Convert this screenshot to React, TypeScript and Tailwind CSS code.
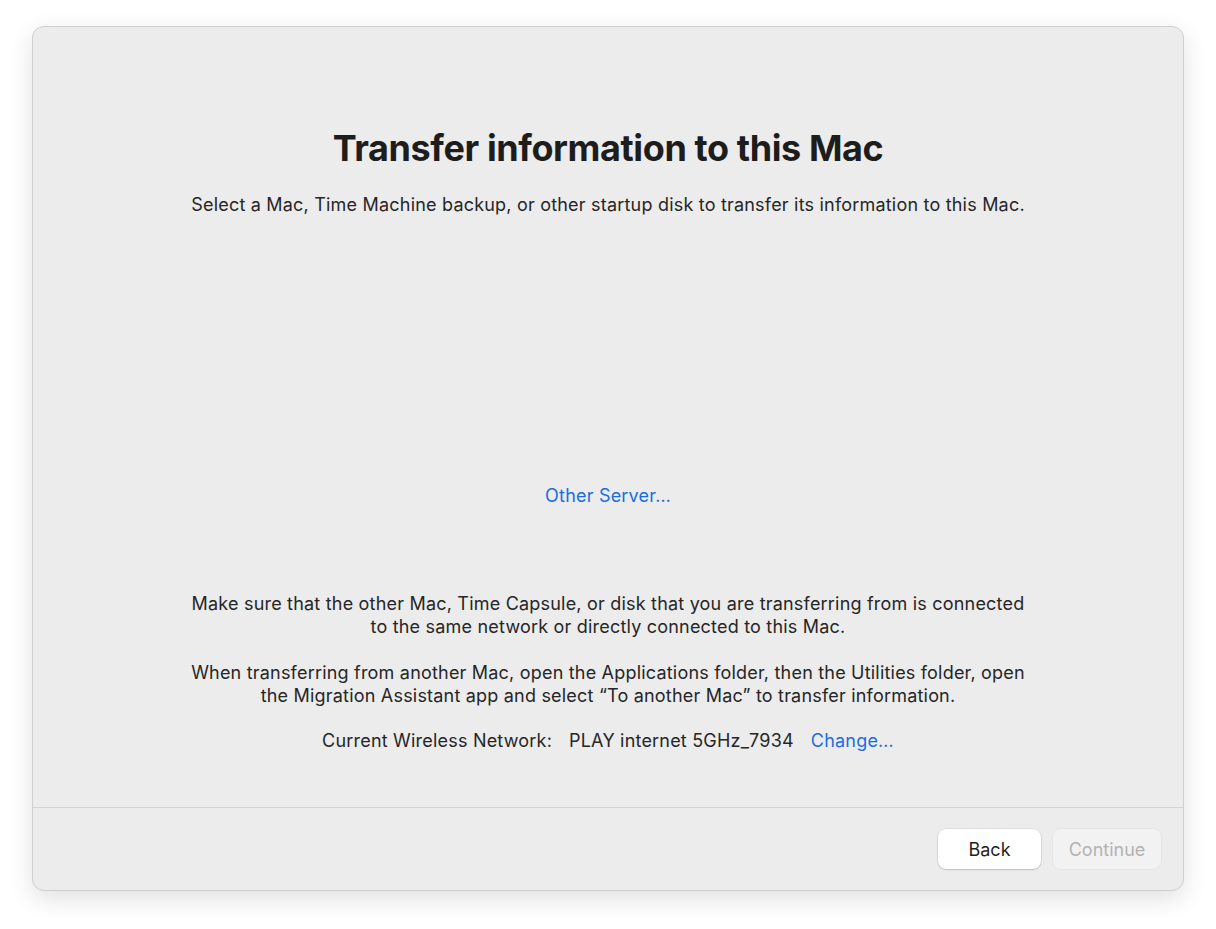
import React from "react";

const font = { fontFamily: "Inter, 'Noto Sans', sans-serif" };

export default function App() {
  return (
    <div className="w-full h-[929px] bg-white pl-[32px] pt-[26px]" style={font}>
      <div className="w-[1152px] h-[865px] rounded-[12px] border border-[#cfcfcf] bg-[#ececec] shadow-[0_8px_24px_rgba(0,0,0,0.12)] flex flex-col overflow-hidden">
        <div className="flex-1 flex flex-col items-center pt-[99px] text-[#262626] text-[18px] tracking-[0.2px]">
          <h1 className="text-[36px] leading-[44px] font-bold text-[#1d1d1d] tracking-[-0.4px]">
            Transfer information to this Mac
          </h1>
          <p className="mt-[24px] leading-[22px]">
            Select a Mac, Time Machine backup, or other startup disk to transfer its information to this Mac.
          </p>
          <button className="mt-[269px] leading-[22px] text-[#1a6de0]">Other Server…</button>
          <p className="mt-[85px] leading-[23px] text-center">
            Make sure that the other Mac, Time Capsule, or disk that you are transferring from is connected
            <br />
            to the same network or directly connected to this Mac.
          </p>
          <p className="mt-[23px] leading-[23px] text-center">
            When transferring from another Mac, open the Applications folder, then the Utilities folder, open
            <br />
            the Migration Assistant app and select “To another Mac” to transfer information.
          </p>
          <div className="mt-[22px] flex items-center gap-[17px] leading-[23px]">
            <span>Current Wireless Network:</span>
            <span>PLAY internet 5GHz_7934</span>
            <button className="text-[#1a6de0]">Change…</button>
          </div>
        </div>
        <div className="h-[83px] border-t border-[#d4d4d4] flex justify-end items-start pt-[21px] pr-[22px] gap-[12px]">
          <button className="w-[103px] h-[40px] rounded-[8px] bg-white text-[18px] text-[#1f1f1f] shadow-[0_0_0_0.5px_rgba(0,0,0,0.12),0_1px_1.5px_rgba(0,0,0,0.15)]">
            Back
          </button>
          <button className="w-[108px] h-[40px] rounded-[8px] bg-[#f2f2f2] text-[18px] text-[#b3b3b3] shadow-[0_0_0_0.5px_rgba(0,0,0,0.06)]">
            Continue
          </button>
        </div>
      </div>
    </div>
  );
}
